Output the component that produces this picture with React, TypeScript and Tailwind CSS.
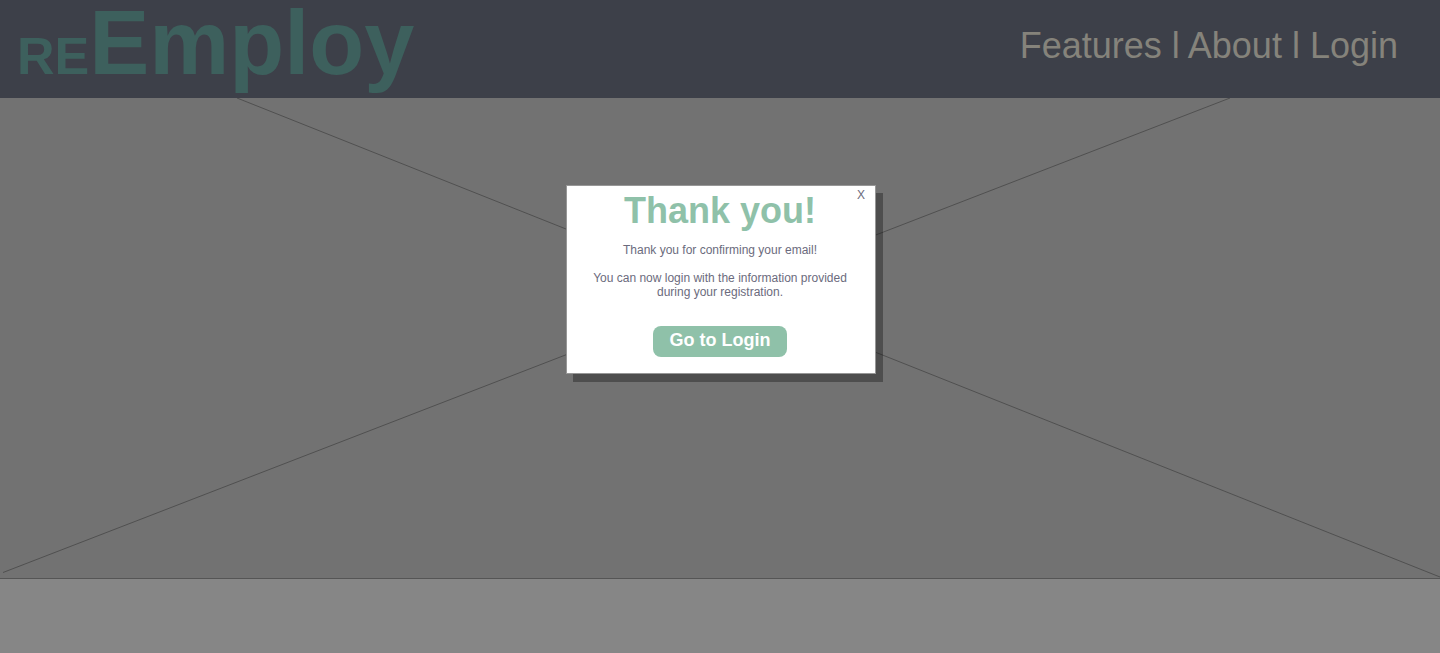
const navItems = [
  { label: "Features", href: "#features" },
  { label: "About", href: "#about" },
  { label: "Login", href: "#login" },
];

function Header() {
  return (
    <header className="flex h-[98px] items-start justify-between bg-[#3d4049] pr-[42px] pl-[17px]">
      <a
        href="#home"
        className="flex items-baseline font-bold leading-[86px] text-[#3d605d]"
      >
        <span className="text-[52px]">RE</span>
        <span className="text-[90px]">Employ</span>
      </a>
      <nav className="flex pt-6 text-4xl leading-[44px] whitespace-pre text-[#85837b]">
        {navItems.map((item, index) => (
          <span key={item.label}>
            {index > 0 && <span aria-hidden="true"> l </span>}
            <a href={item.href}>{item.label}</a>
          </span>
        ))}
      </nav>
    </header>
  );
}

function Hero() {
  return (
    <section className="h-[481px] border-b border-[#555555] bg-[#727272]">
      <svg
        aria-hidden="true"
        className="block h-full w-full"
        viewBox="0 0 1440 480"
        preserveAspectRatio="none"
        stroke="#505050"
        strokeWidth="1"
      >
        <line x1="237" y1="0" x2="1440" y2="479" />
        <line x1="3" y1="474.5" x2="1230" y2="0" />
      </svg>
    </section>
  );
}

function ThankYouDialog() {
  return (
    <div className="absolute inset-0 flex items-start justify-center pt-[185px] pl-0.5">
      <div
        role="dialog"
        aria-labelledby="dialog-title"
        className="relative flex w-[310px] flex-col items-center border border-[#979797] bg-white pt-1 pr-0.5 pb-4 text-center text-xs leading-[14px] text-[#6b6b7d] shadow-[7px_8px_0_rgba(0,0,0,0.31)]"
      >
        <button
          type="button"
          aria-label="Close"
          className="absolute top-0.5 right-2.5 cursor-pointer"
        >
          X
        </button>
        <h1
          id="dialog-title"
          className="text-4xl leading-[42px] font-bold text-[#8fc1a9]"
        >
          Thank you!
        </h1>
        <p className="mt-[11px]">Thank you for confirming your email!</p>
        <p className="mt-3.5 px-5">
          You can now login with the information provided during your
          registration.
        </p>
        <button
          type="button"
          className="mt-[27px] h-[31px] w-[134px] cursor-pointer rounded-lg bg-[#8fc1a9] pb-1 text-lg leading-5 font-bold text-white"
        >
          Go to Login
        </button>
      </div>
    </div>
  );
}

export default function App() {
  return (
    <div className="relative flex min-h-screen flex-col bg-[#868686] font-['Liberation_Sans',Arial,sans-serif]">
      <Header />
      <Hero />
      <ThankYouDialog />
    </div>
  );
}
